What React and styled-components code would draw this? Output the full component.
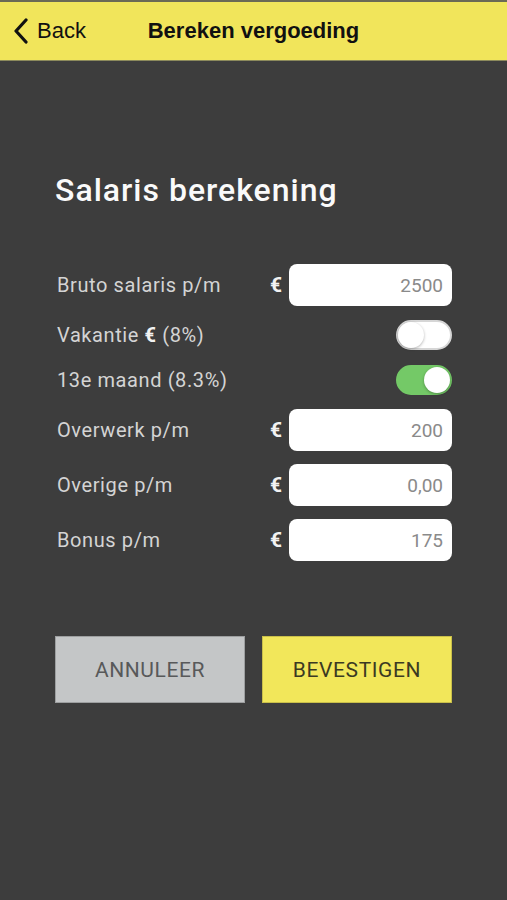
import styled, { createGlobalStyle } from "styled-components";

const GlobalStyle = createGlobalStyle`
  html, body {
    margin: 0;
    padding: 0;
    background: #3d3d3d;
  }
  body {
    font-family: Roboto, "DejaVu Sans", sans-serif;
  }
`;

const Screen = styled.div`
  width: 507px;
  min-height: 900px;
  background: #3d3d3d;
  display: flex;
  flex-direction: column;
`;

const Header = styled.header`
  height: 58px;
  background: #f1e55b;
  border-top: 2px solid #6b6a55;
  border-bottom: 1px solid #8c8a5c;
  display: flex;
  align-items: center;
  position: relative;
`;

const BackButton = styled.div`
  display: flex;
  align-items: center;
  gap: 8px;
  padding-left: 13px;
  font-family: "Liberation Sans", Arial, sans-serif;
  font-size: 22px;
  color: #111;
`;

const HeaderTitle = styled.div`
  position: absolute;
  left: 0;
  right: 0;
  text-align: center;
  font-family: "Liberation Sans", Arial, sans-serif;
  font-weight: bold;
  font-size: 22px;
  color: #111;
  pointer-events: none;
`;

const Content = styled.main`
  padding: 110px 55px 0 55px;
  display: flex;
  flex-direction: column;
`;

const Title = styled.h1`
  margin: 0 0 55px 0;
  font-size: 32px;
  font-weight: 500;
  color: #fafafa;
  letter-spacing: 1px;
  line-height: 38px;
`;

const Form = styled.div`
  display: flex;
  flex-direction: column;
  gap: 13px;
`;

const Row = styled.div`
  display: flex;
  align-items: center;
  height: ${(p) => (p.$toggle ? "32px" : "42px")};
`;

const Label = styled.span`
  flex: 1;
  padding-left: 2px;
  font-size: 20px;
  letter-spacing: 0.6px;
  color: #d4d4d4;
  font-weight: 400;
`;

const Euro = styled.span`
  font-size: 21px;
  font-weight: 700;
  color: #f2f2f2;
  margin-right: 7px;
`;

const Input = styled.div`
  width: 163px;
  height: 42px;
  box-sizing: border-box;
  background: #fff;
  border-radius: 8px;
  display: flex;
  align-items: center;
  justify-content: flex-end;
  padding-right: 9px;
  font-size: 19px;
  color: #8a8a8a;
`;

const Toggle = styled.div`
  width: 56px;
  height: 30px;
  box-sizing: border-box;
  border-radius: 15px;
  background: ${(p) => (p.$on ? "#74c967" : "#fff")};
  border: 2px solid ${(p) => (p.$on ? "#74c967" : "#d6d6d6")};
  display: flex;
  justify-content: ${(p) => (p.$on ? "flex-end" : "flex-start")};
  align-items: center;
`;

const Knob = styled.div`
  width: 26px;
  height: 26px;
  border-radius: 50%;
  background: #fff;
  box-shadow: 0 1px 3px rgba(0, 0, 0, 0.3);
`;

const Buttons = styled.div`
  display: flex;
  gap: 17px;
  margin-top: 75px;
`;

const ActionButton = styled.button`
  width: 190px;
  height: 67px;
  border: 1px solid ${(p) => (p.$primary ? "#c9bf4a" : "#9d9fa0")};
  background: ${(p) => (p.$primary ? "#f2e75a" : "#c4c6c7")};
  color: ${(p) => (p.$primary ? "#3b3a22" : "#58595a")};
  font-family: Roboto, "DejaVu Sans", sans-serif;
  font-size: 21px;
  letter-spacing: 0.6px;
  padding: 0;
`;

const fields = [
  { label: "Bruto salaris p/m", value: "2500" },
  { label: "Vakantie € (8%)", toggle: true, on: false },
  { label: "13e maand (8.3%)", toggle: true, on: true },
  { label: "Overwerk p/m", value: "200" },
  { label: "Overige p/m", value: "0,00" },
  { label: "Bonus p/m", value: "175" },
];

function BackChevron() {
  return (
    <svg width="16" height="26" viewBox="0 0 16 26">
      <polyline
        points="13,2 3,13 13,24"
        fill="none"
        stroke="#111"
        strokeWidth="3.2"
        strokeLinecap="round"
        strokeLinejoin="round"
      />
    </svg>
  );
}

function renderLabel(text) {
  if (!text.includes("€")) return text;
  const [a, b] = text.split("€");
  return (
    <>
      {a}
      <b style={{ color: "#f2f2f2" }}>€</b>
      {b}
    </>
  );
}

export default function App() {
  return (
    <Screen>
      <GlobalStyle />
      <Header>
        <BackButton>
          <BackChevron />
          Back
        </BackButton>
        <HeaderTitle>Bereken vergoeding</HeaderTitle>
      </Header>
      <Content>
        <Title>Salaris berekening</Title>
        <Form>
          {fields.map((f) => (
            <Row key={f.label} $toggle={f.toggle}>
              <Label>{renderLabel(f.label)}</Label>
              {f.toggle ? (
                <Toggle $on={f.on}>
                  <Knob />
                </Toggle>
              ) : (
                <>
                  <Euro>€</Euro>
                  <Input>{f.value}</Input>
                </>
              )}
            </Row>
          ))}
        </Form>
        <Buttons>
          <ActionButton>ANNULEER</ActionButton>
          <ActionButton $primary>BEVESTIGEN</ActionButton>
        </Buttons>
      </Content>
    </Screen>
  );
}
